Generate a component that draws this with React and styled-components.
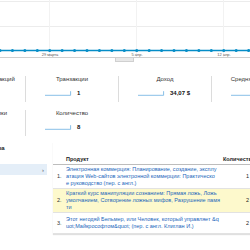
import React from 'react';
import styled, { createGlobalStyle } from 'styled-components';

const GlobalStyle = createGlobalStyle`
  html, body {
    margin: 0;
    padding: 0;
    background: #fff;
    overflow: hidden;
  }
  body {
    width: 250px;
    height: 250px;
    font-family: "Liberation Sans", Arial, sans-serif;
    color: #222;
  }
`;

const Page = styled.div`
  width: 250px;
  height: 250px;
  overflow: hidden;
`;

const ChartBox = styled.div`
  height: 57px;
  border-bottom: 1px solid #cfcfcf;
`;

const RangeBar = styled.div`
  height: 4px;
  display: flex;
`;

const RangeHandle = styled.div`
  margin-left: 115px;
  width: 19px;
  height: 4px;
  box-sizing: border-box;
  background: #e8e8e8;
  border: 1px solid #d0d0d0;
  border-top: none;
`;

const Metrics = styled.div`
  margin: 14px 0 0 -68px;
  display: grid;
  grid-template-columns: repeat(4, 93px);
  row-gap: 8px;
`;

const Metric = styled.div`
  height: 26px;
  border-left: ${p => (p.$first ? 'none' : '1px solid #dcdcdc')};
  box-sizing: border-box;
  display: flex;
  flex-direction: column;
`;

const MetricLabel = styled.div`
  font-size: 6px;
  line-height: 7px;
  text-align: center;
  white-space: nowrap;
  color: #333;
`;

const MetricValueRow = styled.div`
  margin-top: 6px;
  padding-left: 19px;
  display: flex;
  align-items: center;
  gap: 5px;
  height: 7px;
`;

const MetricValue = styled.span`
  font-size: 6px;
  font-weight: bold;
  color: #111;
  white-space: nowrap;
`;

const TableSection = styled.div`
  margin: 6px 0 0 -85px;
  display: flex;
  gap: 6px;
  align-items: flex-start;
`;

const LeftPanel = styled.div`
  width: 132px;
  flex: none;
`;

const LeftHeader = styled.div`
  height: 22px;
  box-sizing: border-box;
  padding: 3px 0 0 19px;
  font-size: 6px;
  line-height: 7px;
  font-weight: bold;
  white-space: nowrap;
`;

const LeftItem = styled.div`
  height: 11px;
  background: ${p => (p.$active ? '#e4eef8' : 'transparent')};
  display: flex;
  justify-content: space-between;
  align-items: center;
  padding: 0 3px 0 17px;
  font-size: 5.5px;
  color: #2266bb;
`;

const Arrow = styled.span`
  color: #555;
  font-size: 6px;
`;

const RightPanel = styled.div`
  width: 215px;
  flex: none;
  box-shadow: 0 1px 1px rgba(0, 0, 0, 0.12);
`;

const Row = styled.div`
  display: grid;
  grid-template-columns: 13px 154px 48px;
  align-items: center;
  font-size: 5.5px;
  line-height: 7px;
  background: ${p => p.$bg || '#fff'};
  border-bottom: 1px solid ${p => p.$line || '#e2e2e2'};
  padding: ${p => p.$pad || '1px 0'};
  box-sizing: border-box;
  height: ${p => p.$h || 'auto'};
`;

const HeadCell = styled.div`
  font-weight: bold;
  white-space: nowrap;
  font-size: 5.5px;
  padding-left: ${p => p.$pl || '0'};
`;

const NumCell = styled.div`
  padding-left: 4px;
  color: #333;
`;

const ProductCell = styled.div`
  color: #2266bb;
  white-space: nowrap;
`;

const QtyCell = styled.div`
  text-align: right;
  padding-right: 19px;
  color: #222;
`;

function Sparkline() {
  return (
    <svg width="27" height="6" viewBox="0 0 27 6">
      <path d="M0 5.3 H25.6 V1.2" fill="none" stroke="#7ab8e4" strokeWidth="0.9" />
    </svg>
  );
}

function Chart() {
  const dots = [];
  for (let i = 0; i < 22; i++) dots.push(i * 12.43);
  return (
    <svg width="250" height="57" viewBox="0 0 250 57">
      <line x1="0" y1="1.5" x2="250" y2="1.5" stroke="#ececec" strokeWidth="1" />
      <line x1="0" y1="26.5" x2="250" y2="26.5" stroke="#ececec" strokeWidth="1" />
      {[49.5, 136.5, 223.5].map(x => (
        <line key={x} x1={x} y1="0" x2={x} y2="57" stroke="#f2f2f2" strokeWidth="1" />
      ))}
      <line x1="0" y1="50.5" x2="250" y2="50.5" stroke="#058dc7" strokeWidth="1.3" />
      {dots.map(x => (
        <circle key={x} cx={x} cy="50.5" r="1.5" fill="#058dc7" />
      ))}
      <g fontFamily="Liberation Sans, Arial, sans-serif" fontSize="4" fill="#555" textAnchor="middle">
        <text x="50" y="55.5">29 марта</text>
        <text x="137" y="55.5">5 апр.</text>
        <text x="224" y="55.5">12 апр.</text>
      </g>
    </svg>
  );
}

const metrics = [
  { label: 'Коэффициент транзакций', value: '5%' },
  { label: 'Транзакции', value: '1' },
  { label: 'Доход', value: '34,07 $' },
  { label: 'Средняя стоимость', value: '34,07 $' },
  { label: 'Уникальные покупки', value: '3' },
  { label: 'Количество', value: '8' },
];

const products = [
  {
    lines: [
      'Электронная коммерция: Планирование, создание, эксплу',
      'атация Web-сайтов электронной коммерции: Практическо',
      'е руководство (пер. с англ.)',
    ],
    qty: '1',
  },
  {
    lines: [
      'Краткий курс манипуляции сознанием: Прямая ложь, Ложь',
      'умолчанием, Сотворение ложных мифов, Разрушение памя',
      'ти',
    ],
    qty: '2',
    bg: '#fdf9cc',
  },
  {
    lines: [
      'Этот негодяй Бельмер, или Человек, который управляет &q',
      'uot;Майкрософтом&quot; (пер. с англ. Клиглан И.)',
    ],
    qty: '2',
    pad: '3px 0',
  },
];

export default function App() {
  return (
    <Page>
      <GlobalStyle />
      <ChartBox>
        <Chart />
      </ChartBox>
      <RangeBar>
        <RangeHandle />
      </RangeBar>

      <Metrics>
        {metrics.map((m, i) => (
          <Metric key={m.label} $first={i % 4 === 0}>
            <MetricLabel>{m.label}</MetricLabel>
            <MetricValueRow>
              <Sparkline />
              <MetricValue>{m.value}</MetricValue>
            </MetricValueRow>
          </Metric>
        ))}
      </Metrics>

      <TableSection>
        <LeftPanel>
          <LeftHeader>Эффективность товара</LeftHeader>
          <LeftItem $active>
            <span>Продукт</span>
            <Arrow>›</Arrow>
          </LeftItem>
        </LeftPanel>

        <RightPanel>
          <Row $h="23px" $line="#bdbdbd" style={{ alignItems: 'end' }}>
            <div />
            <HeadCell>Продукт</HeadCell>
            <HeadCell $pl="3px">Количество</HeadCell>
          </Row>
          {products.map((p, i) => (
            <Row key={i} $bg={p.bg} $pad={p.pad}>
              <NumCell>{i + 1}.</NumCell>
              <ProductCell>
                {p.lines.map((l, j) => (
                  <div key={j}>{l}</div>
                ))}
              </ProductCell>
              <QtyCell>{p.qty}</QtyCell>
            </Row>
          ))}
        </RightPanel>
      </TableSection>
    </Page>
  );
}
